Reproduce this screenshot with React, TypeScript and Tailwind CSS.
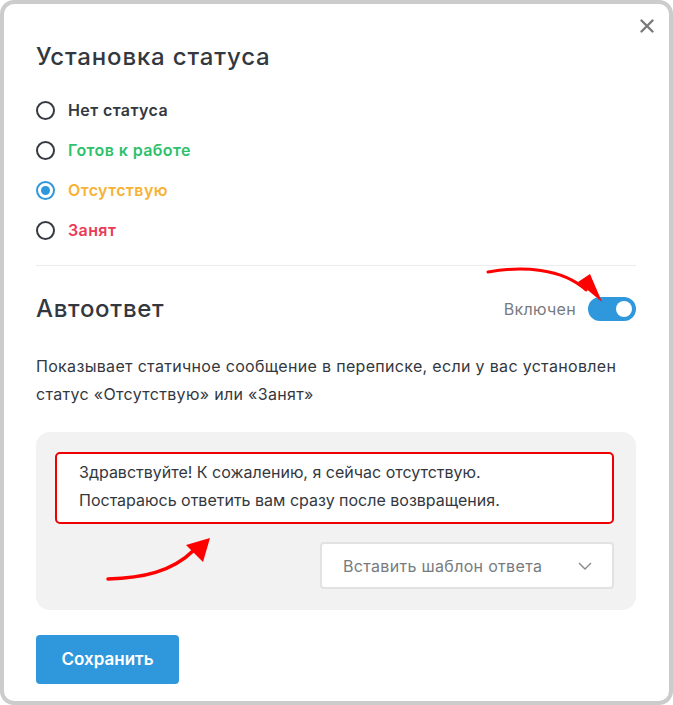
import { useState } from "react";

/* Data */
const STATUSES = [
    { id: "none", label: "Нет статуса", color: "text-[#333840]" },
    { id: "ready", label: "Готов к работе", color: "text-[#2ec16c]" },
    { id: "away", label: "Отсутствую", color: "text-[#f8b234]" },
    { id: "busy", label: "Занят", color: "text-[#ea3a55]" },
];

/* Radio */
function Radio({ checked }: { checked: boolean }) {
    return checked ? (
        <span className="w-[19px] h-[19px] rounded-full border-2 border-[#2f98dc] flex items-center justify-center">
            <span className="w-[9px] h-[9px] rounded-full bg-[#2f98dc]" />
        </span>
    ) : (
        <span className="w-[19px] h-[19px] rounded-full border-2 border-[#353a42]" />
    );
}

/* Red hint arrows */
function ArrowToToggle() {
    return (
        <svg className="absolute left-[478px] top-[258px]" width="130" height="48" viewBox="0 0 130 48">
            <path d="M6 10 C 40 4, 80 6, 104 28" fill="none" stroke="#f00" strokeWidth="3" strokeLinecap="round" />
            <path d="M96 20 L 120 40 L 108 12 Z" fill="#f00" />
        </svg>
    );
}

function ArrowToMessage() {
    return (
        <svg className="absolute left-[98px] top-[528px]" width="116" height="54" viewBox="0 0 116 54">
            <path d="M6 47 C 40 46, 70 40, 92 18" fill="none" stroke="#f00" strokeWidth="3.5" strokeLinecap="round" />
            <path d="M84 13 L 108 6 L 101 30 Z" fill="#f00" />
        </svg>
    );
}

export default function App() {
    const [status, setStatus] = useState("away");
    const [auto, setAuto] = useState(true);

    return (
        <div
            className="relative w-[673px] h-[705px] bg-white border-4 border-[#cccccc] rounded-[14px] pl-8 pr-[33px] pt-[39px] text-[#333840]"
            style={{ fontFamily: "Inter, 'Liberation Sans', sans-serif" }}
        >
            {/* Close */}
            <button className="absolute right-[10px] top-[10px] w-6 h-6 flex items-center justify-center text-[#7a7a7a]">
                <svg width="14" height="14" viewBox="0 0 14 14">
                    <path d="M1.5 1.5 L12.5 12.5 M12.5 1.5 L1.5 12.5" stroke="currentColor" strokeWidth="2.4" strokeLinecap="round" />
                </svg>
            </button>

            {/* Heading */}
            <h2 className="text-[24px] leading-7 font-medium tracking-[0.035em] text-[#333840]">
                Установка статуса
            </h2>

            {/* Status list */}
            <div className="mt-[27px] flex flex-col gap-4">
                {STATUSES.map((s) => (
                    <label
                        key={s.id}
                        className="flex items-center gap-[13px] h-6 cursor-pointer"
                        onClick={() => setStatus(s.id)}
                    >
                        <Radio checked={status === s.id} />
                        <span className={`text-[16px] font-semibold tracking-[0.025em] ${s.color}`}>{s.label}</span>
                    </label>
                ))}
            </div>

            <div className="mt-[23px] h-px bg-[#ececec]" />

            {/* Auto reply */}
            <div className="mt-[29px] h-7 flex items-center justify-between">
                <h3 className="text-[24px] leading-7 font-medium tracking-[0.03em] text-[#333840]">
                    Автоответ
                </h3>
                <div className="flex items-center gap-3">
                    <span className="text-[16px] tracking-[0.02em] text-[#777b80]">Включен</span>
                    <button
                        onClick={() => setAuto(!auto)}
                        className={`w-12 h-6 rounded-full flex items-center px-[4px] ${auto ? "bg-[#2f98dc] justify-end" : "bg-[#ccc] justify-start"}`}
                    >
                        <span className="w-4 h-4 rounded-full bg-white" />
                    </button>
                </div>
            </div>

            <p className="mt-[29px] text-[16px] leading-7 tracking-[0.02em] text-[#333840]">
                Показывает статичное сообщение в переписке, если у вас установлен
                <br />
                статус «Отсутствую» или «Занят»
            </p>

            {/* Message box */}
            <div className="mt-6 bg-[#f2f2f2] rounded-[14px] pl-[19px] pr-[22px] pt-5 pb-[21px] flex flex-col">
                <div className="h-[72px] bg-white border-2 border-[#ee0000] rounded-[5px] px-[22px] pt-1 text-[16px] leading-7 text-[#333840]">
                    Здравствуйте! К сожалению, я сейчас отсутствую.
                    <br />
                    Постараюсь ответить вам сразу после возвращения.
                </div>
                <div className="mt-[18px] self-end w-[294px] h-[47px] bg-white border-2 border-[#e2e2e2] rounded-[4px] flex items-center justify-between pl-[21px] pr-[20px]">
                    <span className="text-[16px] tracking-[0.02em] text-[#777b80]">Вставить шаблон ответа</span>
                    <svg width="14" height="8" viewBox="0 0 14 8">
                        <path d="M1 1 L7 7 L13 1" fill="none" stroke="#888" strokeWidth="1.4" />
                    </svg>
                </div>
            </div>

            <button className="mt-[25px] w-[143px] h-[49px] bg-[#2f98dc] rounded-[4px] text-white text-[17px] font-semibold">
                Сохранить
            </button>

            <ArrowToToggle />
            <ArrowToMessage />
        </div>
    );
}
